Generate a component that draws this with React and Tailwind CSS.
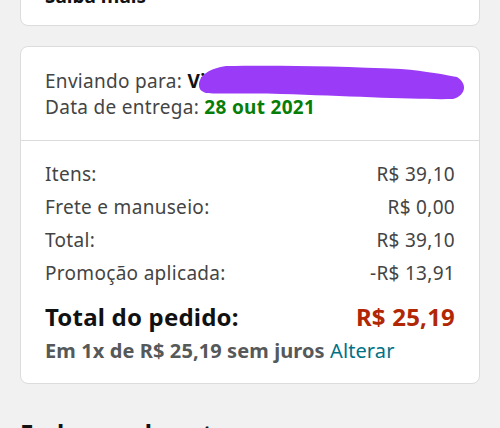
export default function App() {
  const font = { fontFamily: '"Noto Sans", "Open Sans", Arial, sans-serif' };
  return (
    <div className="w-[500px] h-[428px] overflow-hidden bg-[#f1f1f1]" style={font}>
      <div className="px-5">
        <div className="-mt-[30px] h-[56px] rounded-b-lg border border-[#dcdcdc] bg-white px-[24px] pt-[13px]">
          <div className="text-[19px] leading-[24px] font-bold text-[#111]">Saiba mais</div>
        </div>
        <div className="mt-5 rounded-lg border border-[#dcdcdc] bg-white">
          <div className="relative px-[24px] pt-[21px] pb-[20px] text-[19px] leading-[26px] tracking-[0.3px] text-[#444]">
            <div>
              Enviando para: <span className="font-bold text-[#111]">Vi</span>
            </div>
            <div>
              Data de entrega: <span className="font-bold text-[#067d06]">28 out 2021</span>
            </div>
            <svg className="absolute left-0 top-0" width="460" height="93" viewBox="0 0 460 93">
              <text x="396" y="39" fontSize="19" fontWeight="700" fill="#111">P</text>
              <path
                d="M178 38 C 178 28, 190 21, 205 19 C 250 18, 320 19, 380 22 C 405 24, 425 28, 436 30 C 446 36, 446 48, 432 52 C 400 53, 330 49, 260 47 C 220 46, 195 47, 185 46 C 179 44, 178 41, 178 38 Z"
                fill="#9a3cf7"
              />
            </svg>
          </div>
          <div className="border-t border-[#dcdcdc] px-[24px] pt-[17px] pb-[16px] text-[19px] tracking-[0.3px] text-[#444]">
            <div className="flex flex-col leading-[33px]">
              <div className="flex justify-between"><span>Itens:</span><span>R$ 39,10</span></div>
              <div className="flex justify-between"><span>Frete e manuseio:</span><span>R$ 0,00</span></div>
              <div className="flex justify-between"><span>Total:</span><span>R$ 39,10</span></div>
              <div className="flex justify-between"><span>Promoção aplicada:</span><span>-R$ 13,91</span></div>
            </div>
            <div className="mt-[10px] flex justify-between text-[24px] leading-[34px] font-bold tracking-[0.2px]">
              <span className="text-[#111]">Total do pedido:</span>
              <span className="text-[#b12704]">R$ 25,19</span>
            </div>
            <div className="mt-[1px] text-[20px] leading-[32px] font-bold tracking-[0.1px] text-[#565959]">
              Em 1x de R$ 25,19 sem juros <span className="font-normal text-[#007185]">Alterar</span>
            </div>
          </div>
        </div>
        <div className="mt-[34px] text-[24px] leading-[30px] font-bold text-[#111]">Endereço de entrega</div>
      </div>
    </div>
  );
}
